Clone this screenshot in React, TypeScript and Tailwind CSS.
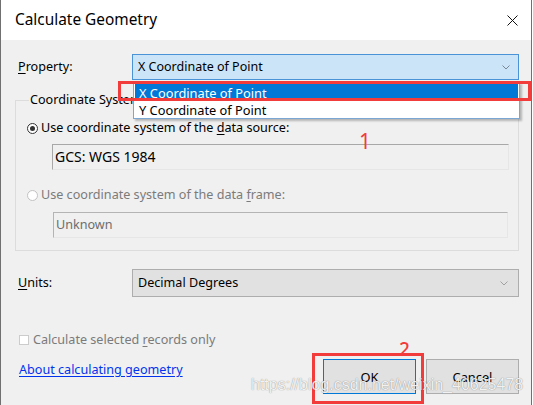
import React from "react";

const font = "font-['Noto_Sans','Liberation_Sans',sans-serif]";

function Chevron({ color = "#5f5f5f" }: { color?: string }) {
  return (
    <svg width="8" height="5" viewBox="0 0 8 5" className="shrink-0">
      <path d="M0.5 0.5 L4 4 L7.5 0.5" fill="none" stroke={color} strokeWidth="1" />
    </svg>
  );
}

function Radio({ checked, disabled }: { checked?: boolean; disabled?: boolean }) {
  return (
    <span
      className={`w-[11px] h-[11px] rounded-full border bg-white flex items-center justify-center shrink-0 ${
        disabled ? "border-[#c2c2c2]" : "border-[#333333]"
      }`}
    >
      {checked && <span className="w-[5px] h-[5px] rounded-full bg-[#333333]" />}
    </span>
  );
}

export default function App() {
  return (
    <div className={`w-[533px] h-[405px] bg-white overflow-hidden ${font} text-black`}>
      <div className="w-[532px] h-full flex flex-col border-x border-[#707070]">
        {/* Title bar */}
        <div className="h-[40px] bg-white flex items-center justify-between pl-[14px] pr-[13px] shrink-0">
          <span className="text-[15.4px] leading-none">Calculate Geometry</span>
          <svg width="11" height="11" viewBox="0 0 11 11">
            <path d="M0.5 0.5 L10.5 10.5 M10.5 0.5 L0.5 10.5" stroke="#111" strokeWidth="1" />
          </svg>
        </div>

        {/* Body */}
        <div className="relative flex-1 bg-[#f0f0f0] pl-[14px] pr-[12px] pt-[14px] text-[12.6px] leading-[16px]">
          {/* Property row */}
          <div className="relative flex items-center pl-[3px]">
            <span className="w-[114px]">
              <u className="underline-offset-2">P</u>roperty:
            </span>
            <div className="w-[387px] h-[26px] bg-[#cce4f7] border border-[#4a93d6] flex items-center justify-between pl-[5px] pr-[8px]">
              <span className="text-[12.5px]">X Coordinate of Point</span>
              <Chevron color="#7a8896" />
            </div>

            {/* open dropdown list */}
            <div className="absolute left-[118px] top-[28px] w-[387px] h-[37px] bg-white border border-[#7aa7d4] shadow-[2px_2px_2px_rgba(0,0,0,0.25)] flex flex-col z-10">
              <div className="h-[17px] mt-[1px] mx-[1px] bg-[#0078d7] text-white flex items-center pl-[4px] text-[12.8px]">
                X Coordinate of Point
              </div>
              <div className="h-[17px] flex items-center pl-[5px] text-[12.8px]">Y Coordinate of Point</div>
            </div>
            {/* annotation box 1 */}
            <div className="absolute left-[103px] top-[27px] w-[413px] h-[20px] border-[3px] border-[#f23b3b] z-20" />
          </div>

          {/* Coordinate System group */}
          <div className="relative mt-[20px] border border-[#dcdcdc] pt-[19px] pb-[12px]">
            <span className="absolute left-[13px] -top-[9px] px-[1px] bg-[#f0f0f0]">Coordinate System</span>
            <span className="absolute left-[343px] top-[28px] text-[21px] leading-[24px] text-[#f23b3b]">1</span>

            <div className="flex items-center gap-[3px] pl-[11px]">
              <Radio checked />
              <span>
                Use coordinate system of the <u className="underline-offset-2">d</u>ata source:
              </span>
            </div>
            <div className="mt-[8px] ml-[36px] mr-[9px] h-[26px] border border-t-[#a8a8a8] border-l-[#a8a8a8] border-b-[#e6e6e6] border-r-[#e6e6e6] flex items-center pl-[2px] text-[14px]">
              GCS: WGS 1984
            </div>

            <div className="mt-[17px] flex items-center gap-[3px] pl-[11px] text-[#7b7b7b]">
              <Radio disabled />
              <span>
                Use coordinate system of the data <u className="underline-offset-2">f</u>rame:
              </span>
            </div>
            <div className="mt-[9px] ml-[37px] mr-[10px] h-[26px] border border-t-[#b4b4b4] border-l-[#b4b4b4] border-b-[#e6e6e6] border-r-[#e6e6e6] flex items-center pl-[2px] text-[#6d6d6d]">
              Unknown
            </div>
          </div>

          {/* Units row */}
          <div className="mt-[18px] flex items-center pl-[3px]">
            <span className="w-[114px]">
              <u className="underline-offset-2">U</u>nits:
            </span>
            <div className="w-[387px] h-[28px] bg-[#e1e1e1] border border-[#adadad] flex items-center justify-between pl-[5px] pr-[10px]">
              <span>Decimal Degrees</span>
              <Chevron color="#a0a0a0" />
            </div>
          </div>

          {/* Checkbox */}
          <div className="mt-[35px] flex items-center gap-[4px] pl-[4px] text-[#7b7b7b]">
            <span className="w-[10px] h-[10px] bg-white border border-[#cccccc] shrink-0" />
            <span>
              Calculate selected <u className="underline-offset-2">r</u>ecords only
            </span>
          </div>

          {/* Bottom row */}
          <div className="mt-[11px] flex items-start justify-between">
            <a className="pl-[4px] mt-[3px] text-[#0033ee] underline underline-offset-2 cursor-pointer">
              About calculating geometry
            </a>
            <div className="flex gap-[10px]">
              <div className="relative">
                <button className="w-[93px] h-[35px] bg-[#e1e1e1] border border-[#0078d7] text-[12.8px]">OK</button>
                <div className="absolute -left-[11px] -top-[6px] w-[112px] h-[51px] border-[3px] border-[#f23b3b]" />
                <span className="absolute left-[76px] -top-[21px] text-[19px] leading-[22px] font-medium text-[#f23b3b]">2</span>
              </div>
              <button className="w-[93px] h-[35px] bg-[#e1e1e1] border border-[#adadad] text-[12.8px]">Cancel</button>
            </div>
          </div>

          {/* watermark */}
          <span className="absolute left-[250px] top-[335px] text-[16px] leading-[20px] font-['Liberation_Sans',sans-serif] text-white/90 [text-shadow:0_0_1px_rgba(0,0,0,0.55)] pointer-events-none whitespace-nowrap">
            https://blog.csdn.net/weixin_40625478
          </span>
        </div>
      </div>
    </div>
  );
}
